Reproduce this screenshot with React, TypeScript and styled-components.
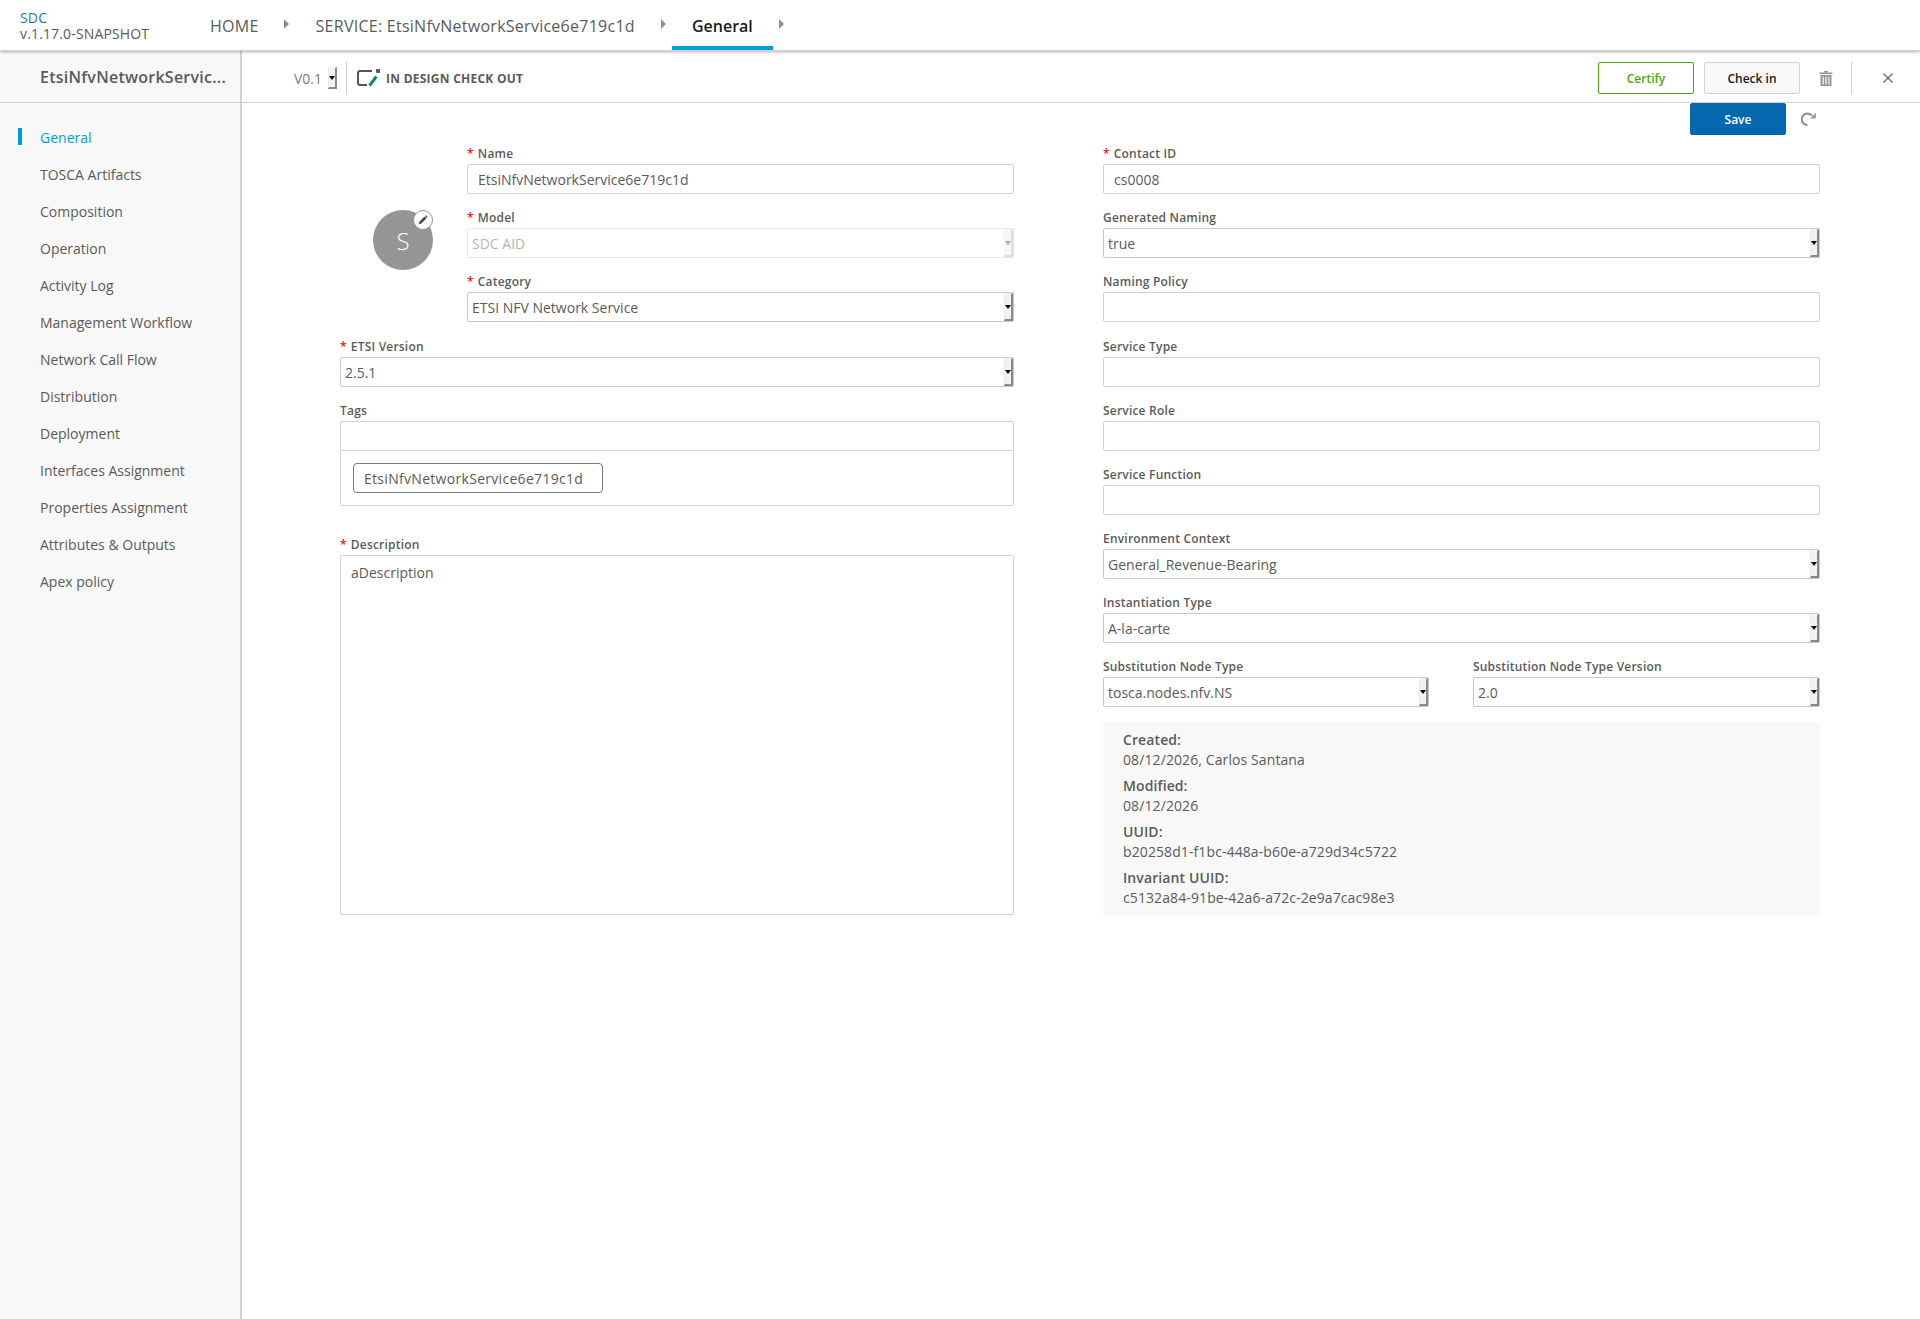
import styled, { createGlobalStyle } from "styled-components";
import { ReactNode } from "react";

const GlobalStyle = createGlobalStyle`
  html, body {
    margin: 0;
    padding: 0;
    background: #fff;
    font-family: "Open Sans", sans-serif;
    color: #5a5a5a;
  }
  * {
    box-sizing: border-box;
  }
`;

const Page = styled.div`
  width: 1920px;
  height: 1319px;
  display: flex;
  flex-direction: column;
  overflow: hidden;
`;

const TopBar = styled.header`
  height: 51px;
  flex: none;
  display: flex;
  background: #fff;
  border-bottom: 1px solid #d2d2d2;
  box-shadow: 0 1px 3px rgba(0, 0, 0, 0.3);
  position: relative;
  z-index: 2;
`;

const Brand = styled.div`
  width: 210px;
  padding: 10px 0 0 20px;
  font-size: 14px;
  line-height: 16px;
  letter-spacing: 0.15px;
  color: #5a5a5a;
`;

const BrandName = styled.div`
  color: #1f76b5;
`;

const Crumb = styled.div<{ $active?: boolean }>`
  height: 50px;
  padding: ${(p) => (p.$active ? "5px 20px 0" : "2px 0 0")};
  margin-left: ${(p) => (p.$active ? "-1px" : "0")};
  min-width: ${(p) => (p.$active ? "101px" : "0")};
  display: flex;
  align-items: center;
  justify-content: center;
  font-size: 16px;
  letter-spacing: ${(p) => (p.$active ? "0" : "0.26px")};
  color: ${(p) => (p.$active ? "#191919" : "#5a5a5a")};
  font-weight: ${(p) => (p.$active ? 600 : 400)};
  border-bottom: ${(p) => (p.$active ? "4px solid #009fdb" : "none")};
`;

const CrumbArrow = styled.span<{ $left: number; $gap: number }>`
  width: 0;
  height: 0;
  margin: -2px ${(p) => p.$gap}px 0 ${(p) => p.$left}px;
  align-self: center;
  border-left: 5px solid #8f8f8f;
  border-top: 5px solid transparent;
  border-bottom: 5px solid transparent;
`;

const Body = styled.div`
  flex: 1;
  display: flex;
  min-height: 0;
`;

const Side = styled.aside`
  width: 242px;
  flex: none;
  background: #f8f8f8;
  border-right: 2px solid #d2d2d2;
`;

const SideTitle = styled.div`
  height: 52px;
  padding: 0 0 0 40px;
  display: flex;
  align-items: center;
  font-size: 16px;
  font-weight: 600;
  letter-spacing: 0.25px;
  color: #5a5a5a;
  white-space: nowrap;
  border-bottom: 1px solid #d2d2d2;
`;

const SideNav = styled.nav`
  padding-top: 16px;
`;

const NavItem = styled.div<{ $active?: boolean }>`
  height: 37px;
  margin-left: 18px;
  padding-left: 22px;
  display: flex;
  align-items: center;
  font-size: 14px;
  position: relative;
  color: ${(p) => (p.$active ? "#009fdb" : "#5a5a5a")};
  &::before {
    content: "";
    display: ${(p) => (p.$active ? "block" : "none")};
    position: absolute;
    left: 0;
    top: 9px;
    width: 4px;
    height: 17px;
    background: #009fdb;
  }
`;

const Main = styled.main`
  flex: 1;
  min-width: 0;
  display: flex;
  flex-direction: column;
`;

const Toolbar = styled.div`
  height: 52px;
  flex: none;
  display: flex;
  align-items: center;
  padding: 3px 26px 0 52px;
  border-bottom: 1px solid #d2d2d2;
`;

const VersionText = styled.span`
  font-size: 14px;
  color: #7b7b7b;
  margin-right: 6px;
`;

const Divider = styled.span<{ $left: number; $right: number }>`
  width: 1px;
  height: 32px;
  background: #d2d2d2;
  margin: 0 ${(p) => p.$right}px 0 ${(p) => p.$left}px;
`;

const Status = styled.span`
  margin-left: 5px;
  font-size: 12px;
  font-weight: 700;
  letter-spacing: 0.25px;
  color: #5a5a5a;
`;

const Spacer = styled.div`
  flex: 1;
`;

const ActionButton = styled.div<{ $variant: "certify" | "plain" | "save" }>`
  width: 96px;
  height: 32px;
  margin-left: ${(p) => (p.$variant === "plain" ? "10px" : "0")};
  display: flex;
  align-items: center;
  justify-content: center;
  font-size: 12px;
  font-weight: 600;
  border-radius: 2px;
  color: ${(p) =>
    p.$variant === "certify" ? "#4ca90c" : p.$variant === "save" ? "#fff" : "#191919"};
  background: ${(p) =>
    p.$variant === "certify" ? "#fff" : p.$variant === "save" ? "#0568ae" : "#f8f8f8"};
  border: 1px solid
    ${(p) =>
      p.$variant === "certify" ? "#4ca90c" : p.$variant === "save" ? "#0568ae" : "#d2d2d2"};
`;

const ToolbarButtons = styled.div`
  display: flex;
  align-items: center;
`;

const IconSlot = styled.span<{ $left?: number }>`
  display: flex;
  margin-left: ${(p) => p.$left ?? 0}px;
`;

const SaveRow = styled.div`
  height: 0;
  display: flex;
  justify-content: flex-end;
  align-items: flex-start;
  padding-right: 104px;
`;

const RefreshSlot = styled.span`
  display: flex;
  margin: 9px 0 0 15px;
`;

const Form = styled.div`
  padding: 41px 0 0 98px;
  display: grid;
  grid-template-columns: 674px 717px;
  column-gap: 89px;
  align-items: start;
`;

const LeftColumn = styled.div`
  display: flex;
  flex-direction: column;
`;

const TopFields = styled.div`
  display: flex;
`;

const IconCol = styled.div`
  width: 127px;
  flex: none;
  padding: 66px 0 0 33px;
`;

const Avatar = styled.div`
  width: 60px;
  height: 60px;
  border-radius: 50%;
  background: #959595;
  color: #fff;
  font-size: 24px;
  font-weight: 300;
  display: flex;
  align-items: center;
  justify-content: center;
  position: relative;
`;

const EditBadge = styled.span`
  position: absolute;
  right: 0;
  top: 0;
  width: 20px;
  height: 20px;
  border-radius: 50%;
  background: #fff;
  border: 1px solid #959595;
  display: flex;
  align-items: center;
  justify-content: center;
`;

const FieldStack = styled.div`
  flex: 1;
  min-width: 0;
`;

const Field = styled.div<{ $mb?: number }>`
  margin-bottom: ${(p) => p.$mb ?? 0}px;
`;

const Label = styled.div`
  height: 20px;
  font-size: 12px;
  font-weight: 600;
  line-height: 20px;
  letter-spacing: 0.2px;
  color: #5a5a5a;
  white-space: nowrap;
`;

const Star = styled.span`
  color: #ee1111;
  margin-right: 4px;
`;

const TextBox = styled.div`
  height: 30px;
  padding: 0 10px;
  display: flex;
  align-items: center;
  font-size: 14px;
  color: #5a5a5a;
  background: #fff;
  border: 1px solid #d2d2d2;
  border-radius: 2px;
`;

const SelectBox = styled.div<{ $disabled?: boolean }>`
  height: 30px;
  padding: 0 0 0 4px;
  display: flex;
  align-items: center;
  justify-content: space-between;
  font-size: 14px;
  color: ${(p) => (p.$disabled ? "#b5b5b5" : "#5a5a5a")};
  background: #fff;
  border: 1px solid ${(p) => (p.$disabled ? "#e6e6e6" : "#c8c8c8")};
  border-radius: 2px;
`;

const SelectArrow = styled.span<{ $disabled?: boolean; $tall?: number }>`
  width: 9px;
  height: ${(p) => p.$tall ?? 28}px;
  flex: none;
  display: flex;
  align-items: center;
  justify-content: center;
  background: ${(p) => (p.$disabled ? "#f6f6f6" : "#f1f1f1")};
  border-left: 1px solid ${(p) => (p.$disabled ? "#f2f2f2" : "#e8e8e8")};
  border-top: 1px solid #f7f7f7;
  border-right: 2px solid ${(p) => (p.$disabled ? "#dddddd" : "#8a8a8a")};
  border-bottom: 2px solid ${(p) => (p.$disabled ? "#dddddd" : "#8a8a8a")};
  &::after {
    content: "";
    width: 0;
    height: 0;
    border-left: 3px solid transparent;
    border-right: 3px solid transparent;
    border-top: 4px solid ${(p) => (p.$disabled ? "#a8a8a8" : "#000")};
  }
`;

const TagsBox = styled.div`
  height: 55px;
  padding: 12px;
  background: #fff;
  border: 1px solid #d2d2d2;
  border-top: none;
  border-radius: 0 0 2px 2px;
`;

const TagChip = styled.div`
  width: 250px;
  height: 30px;
  padding-left: 10px;
  display: flex;
  align-items: center;
  font-size: 14px;
  letter-spacing: 0.3px;
  color: #5a5a5a;
  border: 1px solid #7b7b7b;
  border-radius: 4px;
`;

const Description = styled.div`
  height: 360px;
  padding: 7px 10px;
  font-size: 14px;
  line-height: 20px;
  color: #5a5a5a;
  border: 1px solid #d2d2d2;
  border-radius: 2px;
`;

const RightColumn = styled.div`
  display: flex;
  flex-direction: column;
`;

const Split = styled.div`
  display: grid;
  grid-template-columns: 326px 347px;
  column-gap: 44px;
`;

const InfoPanel = styled.div`
  height: 194px;
  margin-top: 15px;
  padding: 8px 20px;
  background: #f8f8f8;
  font-size: 14px;
  line-height: 20px;
  letter-spacing: 0.1px;
`;

const InfoGroup = styled.div`
  margin-bottom: 6px;
`;

const InfoTitle = styled.div`
  font-weight: 600;
  color: #5a5a5a;
`;

const InfoValue = styled.div`
  color: #5a5a5a;
`;

function Trash() {
  return (
    <svg width="14" height="16" viewBox="0 0 14 16">
      <path d="M0.5 2.5h13v1.6h-13z" fill="#959595" />
      <path d="M5 1h4v1.5H5z" fill="#959595" />
      <path
        d="M1.5 5h11v10.2a.8.8 0 0 1-.8.8H2.3a.8.8 0 0 1-.8-.8zM3.6 6.6v7.8h1.1V6.6zm2.8 0v7.8h1.2V6.6zm2.9 0v7.8h1.1V6.6z"
        fill="#959595"
        fillRule="evenodd"
      />
    </svg>
  );
}

function Close() {
  return (
    <svg width="12" height="12" viewBox="0 0 12 12">
      <path d="M1.5 1.5l9 9M10.5 1.5l-9 9" stroke="#6a6a6a" strokeWidth="1.3" fill="none" />
    </svg>
  );
}

function Refresh() {
  return (
    <svg width="15" height="14" viewBox="0 0 15 14">
      <path d="M10.8 3.600A5.700 5.700 0 1 0 6.500 13" stroke="#959595" strokeWidth="2.2" fill="none" />
      <path d="M14.800 .8v5.700H9z" fill="#959595" />
    </svg>
  );
}

function CheckoutIcon() {
  return (
    <svg width="24" height="18" viewBox="0 0 24 18">
      <path
        d="M15 2H3a2 2 0 0 0-2 2v10a2 2 0 0 0 2 2h7"
        stroke="#555"
        strokeWidth="2"
        fill="none"
      />
      <path d="M12.500 16.500L19.500 7.500" stroke="#148a5c" strokeWidth="3" fill="none" />
      <rect x="19" y="0" width="4" height="4" rx="1" fill="#555" />
    </svg>
  );
}

function Pencil() {
  return (
    <svg width="10" height="10" viewBox="0 0 10 10">
      <path d="M0.800 9.200l.7-2.600 5-5 1.900 1.900-5 5zM7.100 1.100l.6-.5a.6.6 0 0 1 .8 0l.9.9a.6.6 0 0 1 0 .8l-.5.6z" fill="#4a4a4a" />
    </svg>
  );
}

function TextField({ label, required, value, mb }: { label: string; required?: boolean; value?: string; mb?: number }) {
  return (
    <Field $mb={mb}>
      <Label>
        {required ? <Star>*</Star> : null}
        {label}
      </Label>
      <TextBox>{value}</TextBox>
    </Field>
  );
}

function SelectField({
  label,
  required,
  value,
  disabled,
  mb,
}: {
  label: string;
  required?: boolean;
  value: string;
  disabled?: boolean;
  mb?: number;
}) {
  return (
    <Field $mb={mb}>
      <Label>
        {required ? <Star>*</Star> : null}
        {label}
      </Label>
      <SelectBox $disabled={disabled}>
        {value}
        <SelectArrow $disabled={disabled} />
      </SelectBox>
    </Field>
  );
}

const navItems = [
  "General",
  "TOSCA Artifacts",
  "Composition",
  "Operation",
  "Activity Log",
  "Management Workflow",
  "Network Call Flow",
  "Distribution",
  "Deployment",
  "Interfaces Assignment",
  "Properties Assignment",
  "Attributes & Outputs",
  "Apex policy",
];

const info: [string, string][] = [
  ["Created:", "08/12/2026, Carlos Santana"],
  ["Modified:", "08/12/2026"],
  ["UUID:", "b20258d1-f1bc-448a-b60e-a729d34c5722"],
  ["Invariant UUID:", "c5132a84-91be-42a6-a72c-2e9a7cac98e3"],
];

function Slot({ children, left }: { children: ReactNode; left?: number }) {
  return <IconSlot $left={left}>{children}</IconSlot>;
}

export default function App() {
  return (
    <Page>
      <GlobalStyle />
      <TopBar>
        <Brand>
          <BrandName>SDC</BrandName>
          v.1.17.0-SNAPSHOT
        </Brand>
        <Crumb>HOME</Crumb>
        <CrumbArrow $left={25} $gap={27} />
        <Crumb>SERVICE: EtsiNfvNetworkService6e719c1d</Crumb>
        <CrumbArrow $left={26} $gap={7} />
        <Crumb $active>General</Crumb>
        <CrumbArrow $left={6} $gap={0} />
      </TopBar>
      <Body>
        <Side>
          <SideTitle>EtsiNfvNetworkServic...</SideTitle>
          <SideNav>
            {navItems.map((item, i) => (
              <NavItem key={item} $active={i === 0}>
                {item}
              </NavItem>
            ))}
          </SideNav>
        </Side>
        <Main>
          <Toolbar>
            <VersionText>V0.1</VersionText>
            <SelectArrow $tall={22} />
            <Divider $left={9} $right={10} />
            <CheckoutIcon />
            <Status>IN DESIGN CHECK OUT</Status>
            <Spacer />
            <ToolbarButtons>
              <ActionButton $variant="certify">Certify</ActionButton>
              <ActionButton $variant="plain">Check in</ActionButton>
              <Slot left={19}>
                <Trash />
              </Slot>
              <Divider $left={18} $right={30} />
              <Slot>
                <Close />
              </Slot>
            </ToolbarButtons>
          </Toolbar>
          <SaveRow>
            <ActionButton $variant="save">Save</ActionButton>
            <RefreshSlot>
              <Refresh />
            </RefreshSlot>
          </SaveRow>
          <Form>
            <LeftColumn>
              <TopFields>
                <IconCol>
                  <Avatar>
                    S
                    <EditBadge>
                      <Pencil />
                    </EditBadge>
                  </Avatar>
                </IconCol>
                <FieldStack>
                  <TextField label="Name" required value="EtsiNfvNetworkService6e719c1d" mb={14} />
                  <SelectField label="Model" required value="SDC AID" disabled mb={14} />
                  <SelectField label="Category" required value="ETSI NFV Network Service" mb={15} />
                </FieldStack>
              </TopFields>
              <SelectField label="ETSI Version" required value="2.5.1" mb={14} />
              <Field $mb={29}>
                <Label>Tags</Label>
                <TextBox />
                <TagsBox>
                  <TagChip>EtsiNfvNetworkService6e719c1d</TagChip>
                </TagsBox>
              </Field>
              <Field>
                <Label>
                  <Star>*</Star>
                  Description
                </Label>
                <Description>aDescription</Description>
              </Field>
            </LeftColumn>
            <RightColumn>
              <TextField label="Contact ID" required value="cs0008" mb={14} />
              <SelectField label="Generated Naming" value="true" mb={14} />
              <TextField label="Naming Policy" mb={15} />
              <TextField label="Service Type" mb={14} />
              <TextField label="Service Role" mb={14} />
              <TextField label="Service Function" mb={14} />
              <SelectField label="Environment Context" value="General_Revenue-Bearing" mb={14} />
              <SelectField label="Instantiation Type" value="A-la-carte" mb={14} />
              <Split>
                <SelectField label="Substitution Node Type" value="tosca.nodes.nfv.NS" />
                <SelectField label="Substitution Node Type Version" value="2.0" />
              </Split>
              <InfoPanel>
                {info.map(([title, value]) => (
                  <InfoGroup key={title}>
                    <InfoTitle>{title}</InfoTitle>
                    <InfoValue>{value}</InfoValue>
                  </InfoGroup>
                ))}
              </InfoPanel>
            </RightColumn>
          </Form>
        </Main>
      </Body>
    </Page>
  );
}
